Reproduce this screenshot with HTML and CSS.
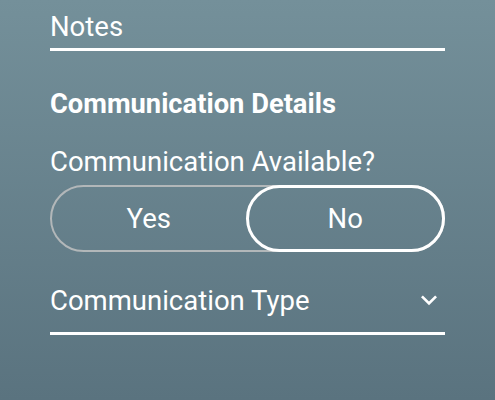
FILE: index.html
```html
<!DOCTYPE html>
<html lang="en">
<head>
<meta charset="utf-8">
<title>Communication Details</title>
<link rel="stylesheet" href="styles.css">
</head>
<body>
<main class="form">
  <div class="field notes">
    <span class="field-text">Notes</span>
  </div>
  <h2 class="section-title">Communication Details</h2>
  <p class="question">Communication Available?</p>
  <div class="toggle" role="radiogroup">
    <div class="option" role="radio" aria-checked="false">Yes</div>
    <div class="option selected" role="radio" aria-checked="true">No</div>
  </div>
  <div class="field select">
    <span class="field-text">Communication Type</span>
    <svg class="chevron" viewBox="0 0 24 24" width="32" height="32" aria-hidden="true">
      <path d="M16.59 8.59L12 13.17 7.41 8.59 6 10l6 6 6-6z" fill="#ffffff"/>
    </svg>
  </div>
</main>
</body>
</html>
```

FILE: styles.css
```css
html, body {
  margin: 0;
  padding: 0;
  height: 100%;
}

body {
  background: linear-gradient(180deg, #74909a 0%, #5a737f 100%);
  color: #ffffff;
  font-family: Roboto, "Noto Sans", "Liberation Sans", sans-serif;
}

.form {
  display: flex;
  flex-direction: column;
  padding: 0 50px;
}

.field {
  display: flex;
  align-items: flex-start;
  justify-content: space-between;
  border-bottom: 3px solid #ffffff;
}

.field-text {
  font-size: 27.5px;
  line-height: 32px;
}

.notes {
  padding-top: 11px;
  padding-bottom: 5px;
}

.section-title {
  margin: 37px 0 0;
  font-size: 27.3px;
  font-weight: 700;
  line-height: 32px;
}

.question {
  margin: 26px 0 0;
  font-size: 27.5px;
  line-height: 32px;
}

.toggle {
  display: flex;
  margin-top: 7px;
  height: 67px;
  box-sizing: border-box;
  border: 2px solid #b2b7b9;
  border-radius: 34px;
}

.option {
  flex: 1;
  display: flex;
  align-items: center;
  justify-content: center;
  font-size: 27.5px;
}

.option.selected {
  margin: -2px -2px -2px 0;
  border: 3px solid #ffffff;
  border-radius: 34px;
}

.select {
  margin-top: 33px;
  padding-bottom: 15px;
}

.chevron {
  margin-top: -1px;
  flex: none;
}
```
